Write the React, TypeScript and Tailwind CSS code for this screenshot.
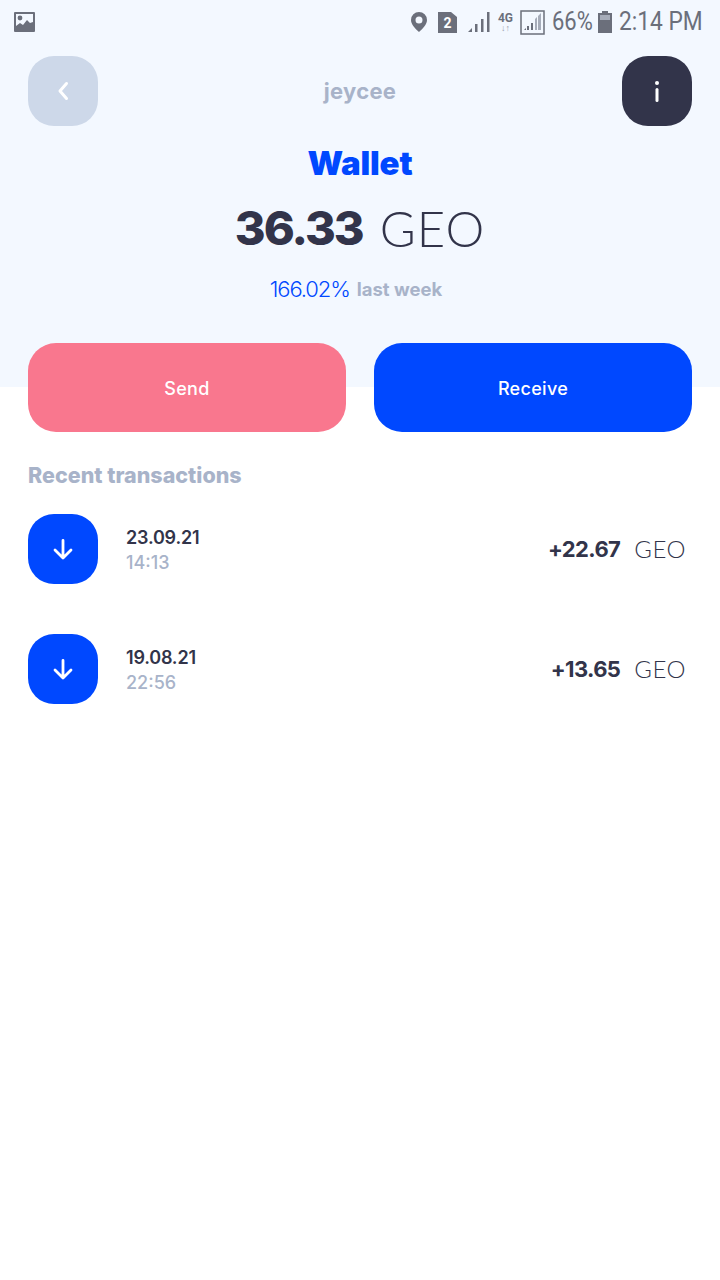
import React from "react";

function Row({ date, time, amount }: { date: string; time: string; amount: string }) {
  return (
    <div className="flex h-[70px] items-center">
      <div className="flex h-[70px] w-[70px] shrink-0 items-center justify-center rounded-[26px] bg-[#0048ff]">
        <svg width="24" height="26" viewBox="0 0 24 26" fill="none" stroke="#fff" strokeWidth="2.800" strokeLinecap="round" strokeLinejoin="round">
          <path d="M12 4.500V22M4 14l8 8 8-8" />
        </svg>
      </div>
      <div className="ml-[28px] flex flex-col pt-[2px]">
        <span className="text-[18px] leading-[25px] font-semibold tracking-[-0.2px] text-[#32344a]">{date}</span>
        <span className="text-[18px] leading-[25px] font-medium text-[#a8b3c9]">{time}</span>
      </div>
      <div className="ml-auto mr-[6px] flex items-center">
        <span className="text-[22px] font-bold tracking-[-0.6px] text-[#32344a]">{amount}</span>
        <span className="ml-[14px] font-['Lato',sans-serif] text-[24px] font-light tracking-[0.5px] text-[#32344a]">GEO</span>
      </div>
    </div>
  );
}

export default function App() {
  return (
    <div className="min-h-[1280px] bg-white font-['Inter',sans-serif]">
      <div className="h-[387px] bg-[#f3f8ff]">
        <div className="flex h-[44px] items-center pl-[14px] pr-[17px] font-['Roboto',sans-serif] text-[#6b6f7b]">
          <svg width="21" height="20" viewBox="0 0 21 20">
            <rect x="0" y="0" width="21" height="20" rx="1" fill="#6b6f7b" />
            <rect x="2" y="2" width="17" height="15" fill="#f3f8ff" />
            <circle cx="6" cy="6" r="2.400" fill="#6b6f7b" />
            <path d="M2 17v-3l4-3 3 2 4-5 3 3 3-1v7z" fill="#6b6f7b" />
          </svg>
          <div className="ml-auto flex items-center">
            <svg width="18" height="22" viewBox="0 0 18 22">
              <path fillRule="evenodd" d="M9 1a8 8 0 0 1 8 8c0 4.500-4.500 9-8 12-3.500-3-8-7.500-8-12a8 8 0 0 1 8-8zm0 4.500a3.500 3.500 0 1 0 0 7 3.500 3.500 0 0 0 0-7z" fill="#6b6f7b" />
            </svg>
            <svg className="ml-[10px]" width="19" height="21" viewBox="0 0 19 21">
              <path d="M0 0h13l6 5v16H0z" fill="#6b6f7b" />
              <text x="9.500" y="16" textAnchor="middle" fontSize="14" fontWeight="700" fill="#fff" fontFamily="Roboto">2</text>
            </svg>
            <svg className="ml-[11px]" width="22" height="22" viewBox="0 0 22 22" fill="#6b6f7b">
              <path d="M0 21l4-4v4z" />
              <rect x="7" y="13" width="2.500" height="8" />
              <rect x="13" y="8" width="2.500" height="13" />
              <rect x="19" y="1" width="2.500" height="20" />
            </svg>
            <span className="ml-[7px] flex w-[17px] flex-col items-center text-[12px] leading-[12px] font-bold">
              4G
              <span className="text-[9px] leading-[8px] font-normal text-[#9aa0ad]">↓↑</span>
            </span>
            <svg className="ml-[6px]" width="25" height="25" viewBox="0 0 25 25">
              <rect x="1" y="1" width="23" height="23" fill="none" stroke="#6b6f7b" strokeWidth="1.500" />
              <path d="M4 20l2-2v2zM7 20v-4h2v4zM11 20v-7h2v7z" fill="#6b6f7b" />
              <path d="M15 20V9l2-2v13zM18 20V6l3-3v17z" fill="#a6acb9" />
            </svg>
            <span className="ml-[7px] inline-block w-[42px] text-[25px] leading-[44px] origin-left scale-x-[0.88] whitespace-nowrap">66%</span>
            <svg className="ml-[4px]" width="14" height="22" viewBox="0 0 14 22">
              <path d="M4 0h6v2h4v20H0V2h4z" fill="#6b6f7b" />
              <rect x="2" y="4" width="10" height="5" fill="#a6acb9" />
            </svg>
            <span className="ml-[7px] inline-block w-[84px] text-[25px] leading-[44px] origin-left scale-x-[0.91] whitespace-nowrap">2:14 PM</span>
          </div>
        </div>
        <div className="mt-[12px] flex items-center justify-between px-[28px]">
          <div className="flex h-[70px] w-[70px] items-center justify-center rounded-[26px] bg-[#cdd8e9]">
            <svg width="24" height="26" viewBox="0 0 24 26" fill="none" stroke="#fff" strokeWidth="3" strokeLinecap="round" strokeLinejoin="round">
              <path d="M15.500 5.500 9 13l6.500 7.500" />
            </svg>
          </div>
          <span className="text-[22px] font-bold tracking-[0.3px] text-[#a8b3c9]">jeycee</span>
          <div className="flex h-[70px] w-[70px] items-center justify-center rounded-[26px] bg-[#32344a]">
            <svg width="6" height="24" viewBox="0 0 6 24" fill="#fff">
              <circle cx="3" cy="4" r="2" />
              <rect x="1.500" y="9" width="3" height="14" rx="1.500" />
            </svg>
          </div>
        </div>
        <div className="mt-[15px] text-center text-[33px] leading-[44px] font-black tracking-[-0.2px] text-[#0048ff]">Wallet</div>
        <div className="mt-[14px] flex items-center justify-center text-[47px] leading-[58px] text-[#32344a]">
          <span className="font-extrabold tracking-[-2px]">36.33</span>
          <span className="ml-[17px] font-['Lato',sans-serif] text-[49px] font-light tracking-[1px]">GEO</span>
        </div>
        <div className="mt-[18px] mr-[8px] flex items-center justify-center leading-[28px]">
          <span className="text-[22px] font-light tracking-[-1.100px] text-[#0048ff]">166.02%</span>
          <span className="ml-[7px] text-[18.500px] font-bold text-[#a8b3c9]">last week</span>
        </div>
      </div>
      <div className="mt-[-44px] flex gap-[28px] px-[28px]">
        <button className="h-[89px] flex-1 rounded-[28px] bg-[#f9778e] pt-[2px] text-[18px] font-medium tracking-[0.3px] text-white">Send</button>
        <button className="h-[89px] flex-1 rounded-[28px] bg-[#0048ff] pt-[2px] text-[18px] font-medium tracking-[0.3px] text-white">Receive</button>
      </div>
      <div className="mt-[28px] px-[28px]">
        <div className="text-[21.500px] leading-[30px] font-extrabold text-[#a8b3c9]">Recent transactions</div>
        <div className="mt-[24px] flex flex-col gap-[50px]">
          <Row date="23.09.21" time="14:13" amount="+22.67" />
          <Row date="19.08.21" time="22:56" amount="+13.65" />
        </div>
      </div>
    </div>
  );
}
